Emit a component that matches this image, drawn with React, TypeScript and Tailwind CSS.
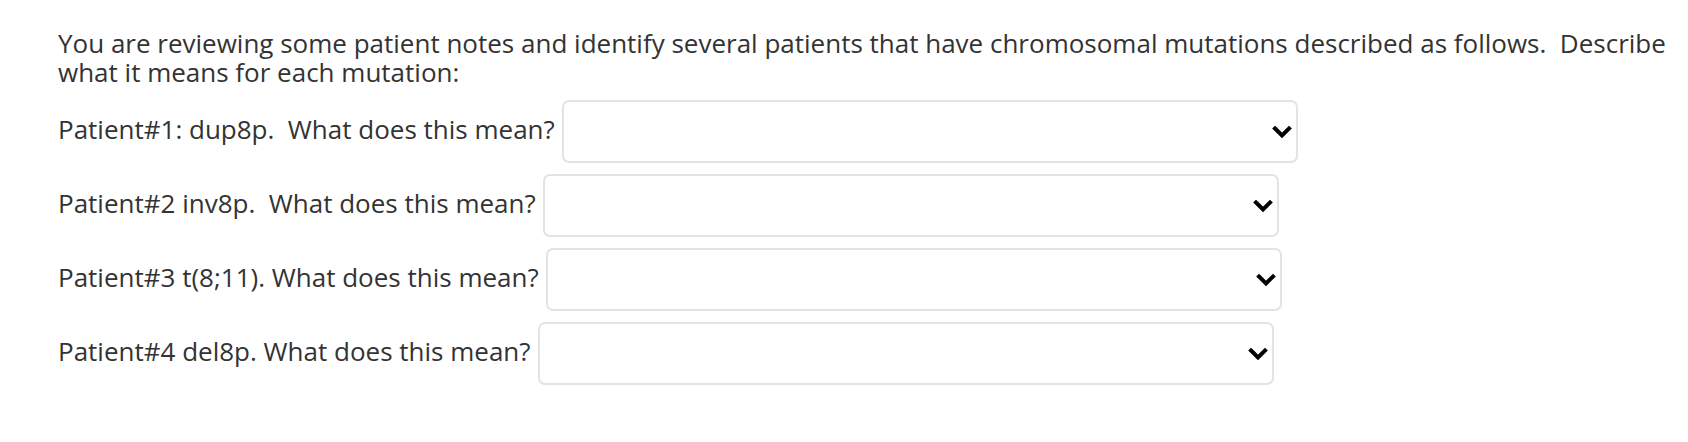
import React from 'react'

const rows = [
  'Patient#1: dup8p.\u00a0 What does this mean?',
  'Patient#2 inv8p.\u00a0 What does this mean?',
  'Patient#3 t(8;11). What does this mean?',
  'Patient#4 del8p. What does this mean?',
]

function Chevron() {
  return (
    <svg width="20" height="14" viewBox="0 0 20 14" className="pointer-events-none absolute right-[6px] top-1/2 -translate-y-1/2">
      <path d="M3 3.5 L10 10.5 L17 3.5" fill="none" stroke="#000" strokeWidth="4" strokeLinecap="square" />
    </svg>
  )
}

export default function App() {
  return (
    <div className="min-h-[442px] bg-white pl-[58px] pt-[29px] text-[26px] leading-[29px] text-[#333] font-['Open_Sans',sans-serif]">
      <p className="mb-[13px]">
        You are reviewing some patient notes and identify several patients that have chromosomal mutations described as follows.&nbsp; Describe what it means for each mutation:
      </p>

      <div className="flex flex-col gap-[11px]">
        {rows.map((label) => (
          <div key={label} className="flex items-center gap-[7px]">
            <span className="whitespace-nowrap pb-1">{label}</span>
            <div className="relative w-[736px] h-[63px]">
              <select
                className="h-full w-full appearance-none rounded-[7px] border-2 border-[#e3e3e3] bg-white outline-none"
                defaultValue=""
              >
                <option value=""></option>
              </select>
              <Chevron />
            </div>
          </div>
        ))}
      </div>
    </div>
  )
}
